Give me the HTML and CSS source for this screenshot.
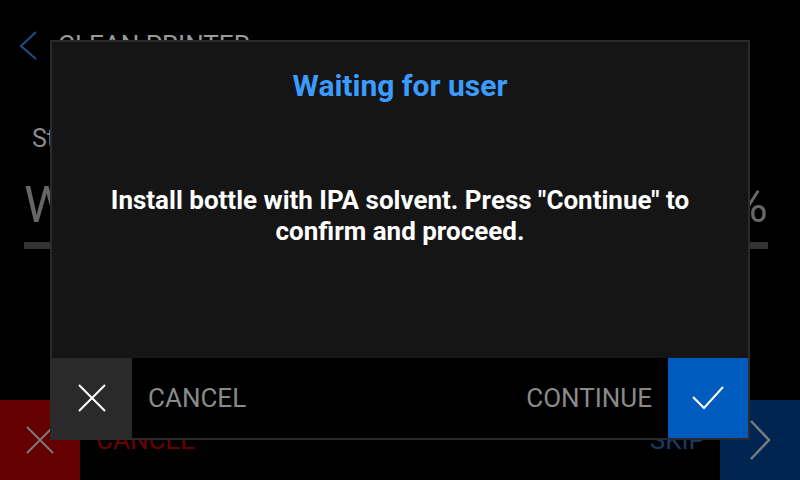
FILE: index.html
```html
<!DOCTYPE html>
<html lang="en">
<head>
    <meta charset="UTF-8">
    <title>Clean Printer</title>
    <link rel="stylesheet" href="styles.css">
</head>
<body>
    <div class="screen">
        <div class="header">
            <svg class="back" width="20" height="30" viewBox="0 0 20 30">
                <polyline points="17,1 2,15 17,28" fill="none" stroke="#1c4f8a" stroke-width="2"/>
            </svg>
            <span class="title">CLEAN PRINTER</span>
        </div>
        <div class="content">
            <div class="step">Step 2</div>
            <div class="status-row">
                <span class="status">Waiting</span>
                <span class="percent">0%</span>
            </div>
            <div class="progress"></div>
        </div>
        <div class="footer">
            <div class="icon-box red">
                <svg width="28" height="28" viewBox="0 0 28 28">
                    <path d="M1 1 L27 27 M27 1 L1 27" stroke="#7a7a7a" stroke-width="2"/>
                </svg>
            </div>
            <span class="footer-label cancel">CANCEL</span>
            <span class="footer-label skip">SKIP</span>
            <div class="icon-box navy">
                <svg width="22" height="40" viewBox="0 0 22 40">
                    <polyline points="2,1 20,20 2,39" fill="none" stroke="#7a7a7a" stroke-width="2.5"/>
                </svg>
            </div>
        </div>
    </div>

    <div class="dialog">
        <div class="dialog-title">Waiting for user</div>
        <div class="dialog-body">Install bottle with IPA solvent. Press "Continue" to confirm and proceed.</div>
        <div class="dialog-buttons">
            <div class="btn-icon grey">
                <svg width="28" height="28" viewBox="0 0 28 28">
                    <path d="M1 1 L27 27 M27 1 L1 27" stroke="#ffffff" stroke-width="2"/>
                </svg>
            </div>
            <span class="btn-label">CANCEL</span>
            <span class="btn-label right">CONTINUE</span>
            <div class="btn-icon blue">
                <svg width="34" height="26" viewBox="0 0 34 26">
                    <polyline points="2,12 13,23 32,2" fill="none" stroke="#ffffff" stroke-width="2"/>
                </svg>
            </div>
        </div>
    </div>
</body>
</html>
```

FILE: styles.css
```css
body {
    margin: 0;
    background: #000;
    font-family: Roboto, 'Liberation Sans', Arial, sans-serif;
    width: 800px;
    height: 480px;
    overflow: hidden;
    position: relative;
}
.screen {
    display: flex;
    flex-direction: column;
    height: 480px;
}
.header {
    display: flex;
    align-items: flex-start;
    height: 90px;
    padding: 30px 0 0 19px;
    box-sizing: border-box;
}
.back {
    margin-top: 1px;
}
.title {
    color: #9a9a9a;
    font-size: 26px;
    line-height: 30px;
    margin-left: 19px;
}
.content {
    padding: 0 32px 0 24px;
    flex: 1;
}
.step {
    color: #8a8a8a;
    font-size: 25px;
    padding-left: 8px;
    margin-top: 34px;
}
.status-row {
    display: flex;
    justify-content: space-between;
    color: #666;
    font-size: 50px;
    margin-top: 22px;
    line-height: 60px;
}
.progress {
    height: 7px;
    background: #333;
    margin-top: 7px;
}
.footer {
    display: flex;
    align-items: center;
    height: 80px;
}
.icon-box {
    width: 80px;
    height: 80px;
    display: flex;
    align-items: center;
    justify-content: center;
}
.red {
    background: #650000;
}
.navy {
    background: #002552;
}
.footer-label {
    font-size: 26px;
}
.cancel {
    color: #6a0000;
    margin-left: 16px;
    flex: 1;
}
.skip {
    color: #1a3a66;
    margin-right: 15px;
}

/* modal */
.dialog {
    position: absolute;
    left: 50px;
    top: 40px;
    width: 696px;
    height: 396px;
    border: 2px solid #2a2a2a;
    background: #151515;
    display: flex;
    flex-direction: column;
}
.dialog-title {
    color: #3b9bff;
    font-size: 30px;
    font-weight: 700;
    text-align: center;
    line-height: 36px;
    margin-top: 26px;
}
.dialog-body {
    color: #fff;
    font-size: 26px;
    font-weight: 700;
    text-align: center;
    line-height: 31px;
    padding: 0 50px;
    margin-top: 81px;
    flex: 1;
}
.dialog-buttons {
    display: flex;
    align-items: center;
    height: 80px;
    background: #000;
}
.btn-icon {
    width: 80px;
    height: 80px;
    display: flex;
    align-items: center;
    justify-content: center;
}
.grey {
    background: #2a2a2a;
}
.blue {
    background: #005bbf;
}
.btn-label {
    color: #8a8a8a;
    font-size: 26px;
    margin-left: 16px;
    flex: 1;
}
.btn-label.right {
    flex: none;
    margin-right: 16px;
}
```
